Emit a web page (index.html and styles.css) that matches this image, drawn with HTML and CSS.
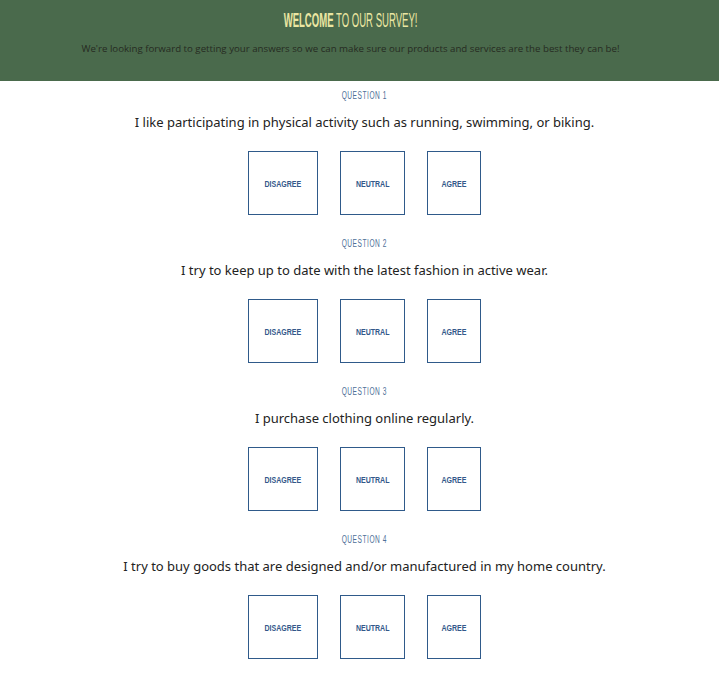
FILE: index.html
```html
<!DOCTYPE html>
<html>
<head>
<meta charset="utf-8">
<link rel="stylesheet" href="styles.css">
</head>
<body>
<header class="hero">
  <h1 class="hero-title"><span class="squeeze-title"><strong>WELCOME</strong> TO OUR SURVEY!</span></h1>
  <p class="hero-sub">We're looking forward to getting your answers so we can make sure our products and services are the best they can be!</p>
</header>
<main class="survey">
  <section class="question">
    <div class="q-label"><span class="squeeze-label">QUESTION 1</span></div>
    <p class="q-text">I like participating in physical activity such as running, swimming, or biking.</p>
    <div class="options"><button class="opt"><span class="squeeze-opt">DISAGREE</span></button><button class="opt"><span class="squeeze-opt">NEUTRAL</span></button><button class="opt"><span class="squeeze-opt">AGREE</span></button></div>
  </section>
  <section class="question">
    <div class="q-label"><span class="squeeze-label">QUESTION 2</span></div>
    <p class="q-text">I try to keep up to date with the latest fashion in active wear.</p>
    <div class="options"><button class="opt"><span class="squeeze-opt">DISAGREE</span></button><button class="opt"><span class="squeeze-opt">NEUTRAL</span></button><button class="opt"><span class="squeeze-opt">AGREE</span></button></div>
  </section>
  <section class="question">
    <div class="q-label"><span class="squeeze-label">QUESTION 3</span></div>
    <p class="q-text">I purchase clothing online regularly.</p>
    <div class="options"><button class="opt"><span class="squeeze-opt">DISAGREE</span></button><button class="opt"><span class="squeeze-opt">NEUTRAL</span></button><button class="opt"><span class="squeeze-opt">AGREE</span></button></div>
  </section>
  <section class="question">
    <div class="q-label"><span class="squeeze-label">QUESTION 4</span></div>
    <p class="q-text">I try to buy goods that are designed and/or manufactured in my home country.</p>
    <div class="options"><button class="opt"><span class="squeeze-opt">DISAGREE</span></button><button class="opt"><span class="squeeze-opt">NEUTRAL</span></button><button class="opt"><span class="squeeze-opt">AGREE</span></button></div>
  </section>
</main>
</body>
</html>
```
FILE: styles.css
```css
* { box-sizing: border-box; }
html, body { margin: 0; padding: 0; background: #fff; }
body { font-family: "Open Sans", "Noto Sans", sans-serif; color: #222; }

.hero {
  background: #4a6a4c;
  height: 81px;
  padding: 9px 18px 0 0;
  text-align: center;
}
.hero-title {
  margin: 0;
  font-family: "Liberation Sans", Arial, sans-serif;
  font-weight: 400;
  font-size: 19.5px;
  line-height: 22px;
  color: #ebe6a2;
}
.squeeze-title {
  display: inline-block;
  transform: scaleX(0.49);
  transform-origin: center;
}
.hero-title strong { font-weight: 700; }
.hero-sub {
  margin: 12px 0 0;
  font-size: 9.7px;
  line-height: 12px;
  color: #262a22;
}

.survey {
  display: flex;
  flex-direction: column;
  padding-left: 10px;
}
.question {
  height: 148px;
  padding-top: 9px;
  display: flex;
  flex-direction: column;
  align-items: center;
}
.q-label {
  font-family: "Liberation Sans", sans-serif;
  font-size: 10px;
  line-height: 12px;
  letter-spacing: 0.8px;
  color: #4e6f98;
}
.squeeze-label {
  display: inline-block;
  transform: scaleX(0.66);
  transform-origin: center;
}
.q-text {
  margin: 11px 0 0;
  font-family: "Noto Sans", "Open Sans", sans-serif;
  font-size: 13px;
  line-height: 18px;
  color: #222;
}
.options {
  margin-top: 20px;
  display: flex;
  gap: 22px;
}
.opt {
  background: #fff;
  border: 1px solid #2f5a8a;
  height: 64px;
  padding: 0 9px;
  font-family: "Liberation Sans", sans-serif;
  font-weight: 700;
  font-size: 9.5px;
  color: #33588a;
  border-radius: 0;
}
.squeeze-opt {
  display: inline-block;
  transform: scaleX(0.74);
  transform-origin: center;
}
```
